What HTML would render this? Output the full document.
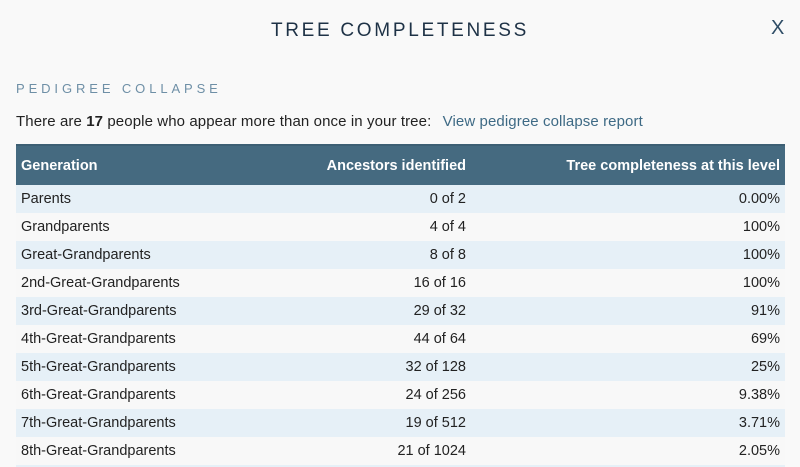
<!DOCTYPE html>
<html style="overflow:hidden;height:467px"><head><style>
body{margin:0;background:#f9f9f9;width:800px;height:467px;overflow:hidden;position:relative;font-family:"Liberation Sans",sans-serif;color:#222;}
.title{position:absolute;top:20px;left:0;width:800px;text-align:center;font-size:19px;letter-spacing:2.7px;color:#1e3246;}
.x{position:absolute;top:17px;left:771px;font-size:20px;color:#2f4d66;}
.sub{position:absolute;top:81px;left:16px;font-size:13px;letter-spacing:3.9px;color:#6e8fa6;}
.p{position:absolute;top:113px;left:16px;font-size:15px;letter-spacing:0.1px;}
.p a{color:#3e6a85;text-decoration:none;margin-left:7px;}
table{position:absolute;top:144px;left:16px;width:769px;border-collapse:collapse;font-size:14.5px;table-layout:fixed;}
th{background:#456a80;color:#fff;height:39px;font-weight:bold;padding:0 5px;border-top:2px solid #3d5f74;}
td{height:28px;padding:0 5px;}
tr:nth-child(odd) td{background:#e6f0f7;}
tr:nth-child(even) td{background:#f8f8f8;}
.r{text-align:right;}
</style></head><body>
<div class="title">TREE COMPLETENESS</div>
<div class="x">X</div>
<div class="sub">PEDIGREE COLLAPSE</div>
<div class="p">There are <b>17</b> people who appear more than once in your tree: <a>View pedigree collapse report</a></div>
<table>
<colgroup><col style="width:255px"><col style="width:200px"><col></colgroup>
<thead><tr><th style="text-align:left">Generation</th><th class="r">Ancestors identified</th><th class="r">Tree completeness at this level</th></tr></thead>
<tbody>
<tr><td>Parents</td><td class="r">0 of 2</td><td class="r">0.00%</td></tr>
<tr><td>Grandparents</td><td class="r">4 of 4</td><td class="r">100%</td></tr>
<tr><td>Great-Grandparents</td><td class="r">8 of 8</td><td class="r">100%</td></tr>
<tr><td>2nd-Great-Grandparents</td><td class="r">16 of 16</td><td class="r">100%</td></tr>
<tr><td>3rd-Great-Grandparents</td><td class="r">29 of 32</td><td class="r">91%</td></tr>
<tr><td>4th-Great-Grandparents</td><td class="r">44 of 64</td><td class="r">69%</td></tr>
<tr><td>5th-Great-Grandparents</td><td class="r">32 of 128</td><td class="r">25%</td></tr>
<tr><td>6th-Great-Grandparents</td><td class="r">24 of 256</td><td class="r">9.38%</td></tr>
<tr><td>7th-Great-Grandparents</td><td class="r">19 of 512</td><td class="r">3.71%</td></tr>
<tr><td>8th-Great-Grandparents</td><td class="r">21 of 1024</td><td class="r">2.05%</td></tr>
<tr><td style="height:2px;padding:0"></td><td style="height:2px;padding:0"></td><td style="height:2px;padding:0"></td></tr>
</tbody></table>
</body></html>
